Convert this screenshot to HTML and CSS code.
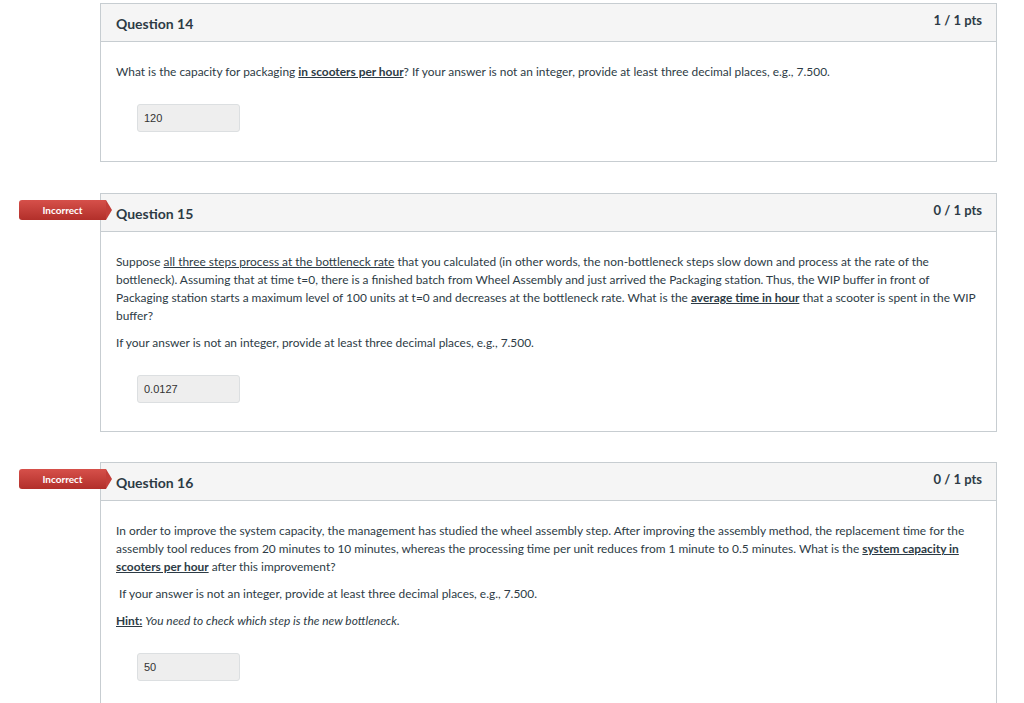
FILE: index.html
```html
<!DOCTYPE html>
<html>
<head>
<meta charset="utf-8">
<link rel="stylesheet" href="styles.css">
</head>
<body>
<div class="quiz">
  <div class="question question-first">
    <div class="q-header">
      <span class="q-name">Question 14</span>
      <span class="q-pts">1 / 1 pts</span>
    </div>
    <div class="q-body">
      <p>What is the capacity for packaging <strong class="u">in scooters per hour</strong>? If your answer is not an integer, provide at least three decimal places, e.g., 7.500.</p>
      <div class="answer">120</div>
    </div>
  </div>

  <div class="question">
    <div class="badge">Incorrect</div>
    <div class="q-header">
      <span class="q-name">Question 15</span>
      <span class="q-pts">0 / 1 pts</span>
    </div>
    <div class="q-body">
      <p>Suppose <span class="u">all three steps process at the bottleneck rate</span> that you calculated (in other words, the non-bottleneck steps slow down and process at the rate of the bottleneck). Assuming that at time t=0, there is a finished batch from Wheel Assembly and just arrived the Packaging station. Thus, the WIP buffer in front of Packaging station starts a maximum level of 100 units at t=0 and decreases at the bottleneck rate. What is the <strong class="u">average time in hour</strong> that a scooter is spent in the WIP buffer?</p>
      <p>If your answer is not an integer, provide at least three decimal places, e.g., 7.500.</p>
      <div class="answer">0.0127</div>
    </div>
  </div>

  <div class="question">
    <div class="badge">Incorrect</div>
    <div class="q-header">
      <span class="q-name">Question 16</span>
      <span class="q-pts">0 / 1 pts</span>
    </div>
    <div class="q-body">
      <p>In order to improve the system capacity, the management has studied the wheel assembly step. After improving the assembly method, the replacement time for the assembly tool reduces from 20 minutes to 10 minutes, whereas the processing time per unit reduces from 1 minute to 0.5 minutes. What is the <strong class="u">system capacity in scooters per hour</strong> after this improvement?</p>
      <p>&nbsp;If your answer is not an integer, provide at least three decimal places, e.g., 7.500.</p>
      <p><strong class="u">Hint:</strong> <em>You need to check which step is the new bottleneck.</em></p>
      <div class="answer">50</div>
    </div>
  </div>
</div>
</body>
</html>
```

FILE: styles.css
```css
html, body {
  margin: 0;
  padding: 0;
  background: #ffffff;
}

body {
  font-family: Lato, "Open Sans", sans-serif;
  color: #2d3b45;
}

.quiz {
  padding: 3px 0 0 100px;
  width: 897px;
}

.question {
  position: relative;
  border: 1px solid #c7cdd1;
  margin-bottom: 30px;
}

.question-first {
  margin-bottom: 31px;
}

.q-header {
  display: flex;
  justify-content: space-between;
  align-items: flex-start;
  height: 37px;
  background: #f5f5f5;
  border-bottom: 1px solid #c7cdd1;
  padding: 0 14px 0 15px;
}

.q-name {
  font-size: 14px;
  font-weight: 700;
  line-height: 20px;
  padding-top: 10px;
  color: #2d3b45;
}

.q-pts {
  font-size: 13px;
  font-weight: 700;
  line-height: 18px;
  padding-top: 7px;
  color: #2d3b45;
}

.q-body {
  padding: 21px 15px 28px 15px;
  font-size: 11.92px;
  line-height: 18px;
}

.question-first .q-body {
  padding-bottom: 29px;
}

.q-body p {
  margin: 0 0 9px 0;
}

.u {
  text-decoration: underline;
}

strong.u {
  font-weight: 700;
}

.answer {
  margin: 23px 0 0 21px;
  width: 95px;
  height: 26px;
  box-sizing: content-box;
  background: #eeeeee;
  border: 1px solid #dcdfe1;
  border-radius: 3px;
  font-family: "Liberation Sans", Arial, sans-serif;
  font-size: 11px;
  line-height: 26px;
  padding-left: 6px;
  color: #333333;
}

.badge {
  position: absolute;
  left: -82px;
  top: 6px;
  width: 87px;
  height: 20px;
  line-height: 20px;
  text-align: center;
  color: #ffffff;
  font-size: 10px;
  font-weight: 700;
  background: linear-gradient(#d6504a, #b22f2a);
  border-radius: 3px 0 0 3px;
}

.badge::after {
  content: "";
  position: absolute;
  left: 87px;
  top: 0;
  border-top: 10px solid transparent;
  border-bottom: 10px solid transparent;
  border-left: 6px solid #c33e39;
}
```
